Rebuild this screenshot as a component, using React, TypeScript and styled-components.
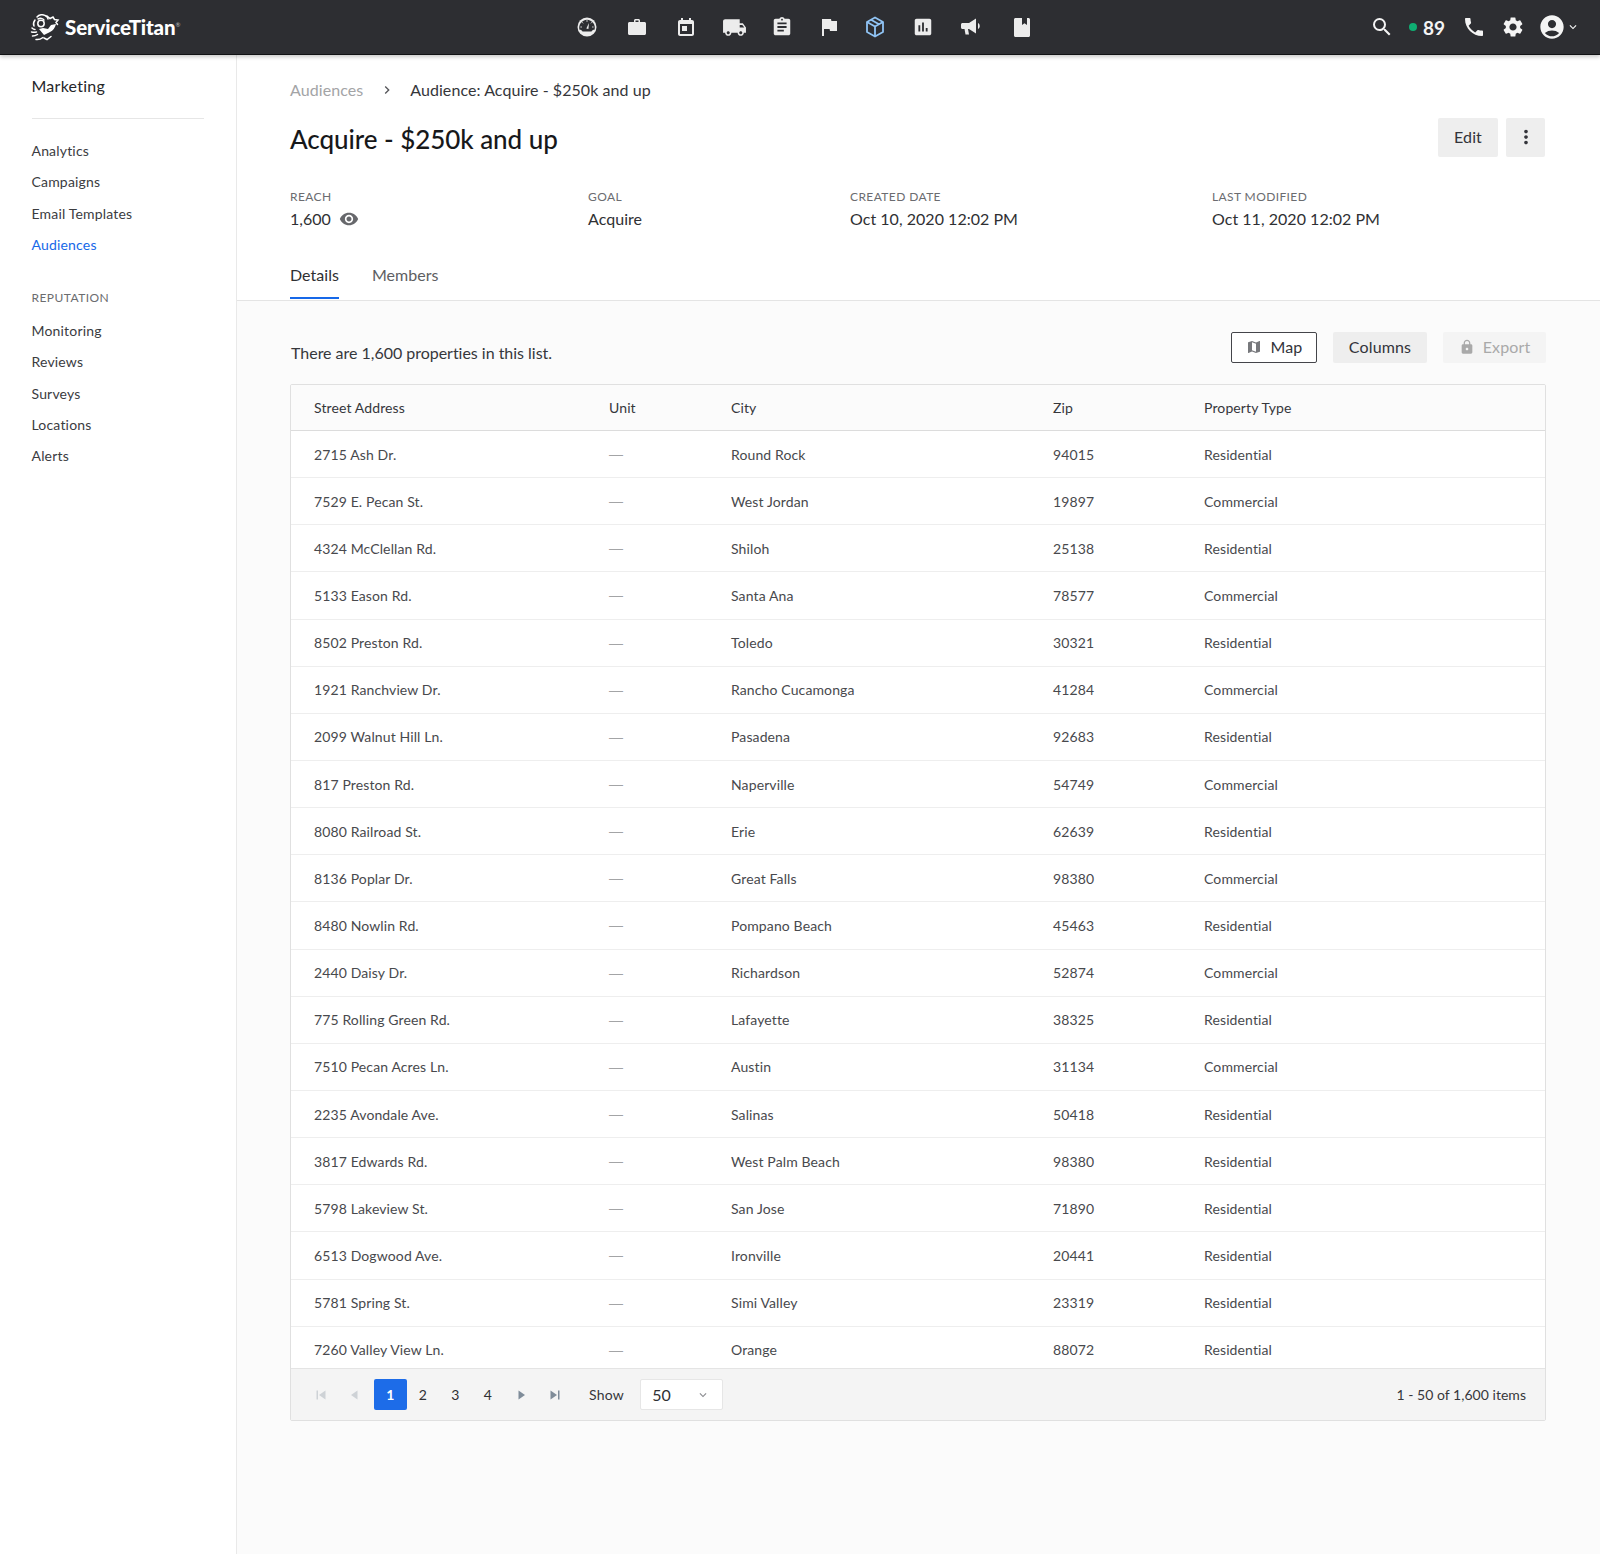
import React from "react";
import styled, { createGlobalStyle } from "styled-components";
import {
  MdLocalShipping, MdAssignment, MdFlag, MdAssessment,
  MdSearch, MdPhone, MdSettings, MdAccountCircle, MdKeyboardArrowDown, MdVisibility, MdMoreVert, MdMap, MdLock, MdChevronRight,
} from "react-icons/md";

const Global = createGlobalStyle`
  html, body { margin: 0; padding: 0; background: #fff; }
  body { font-family: Lato, "Open Sans", sans-serif; color: #2f3033; }
  * { box-sizing: border-box; }
`;

const Page = styled.div`
  width: 1600px;
  height: 1554px;
  display: flex;
  flex-direction: column;
  overflow: hidden;
`;
const TopBar = styled.header`
  height: 55px;
  flex: none;
  display: grid;
  grid-template-columns: 1fr auto 1fr;
  align-items: center;
  background: #2d2e32;
  border-bottom: 1px solid #111214;
  box-shadow: 0 2px 4px rgba(0, 0, 0, 0.22);
  position: relative;
  z-index: 2;
`;
const Brand = styled.div`
  display: flex;
  align-items: center;
  gap: 5px;
  padding-left: 30px;
`;
const BrandName = styled.span`
  font: 900 20.5px/1 "Lato", sans-serif;
  letter-spacing: -0.15px;
  color: #fff;
  sup { font-size: 6px; font-weight: 400; color: #bbb; vertical-align: 8px; line-height: 0; }
`;
const NavIcons = styled.nav`
  display: flex;
  align-items: center;
  margin-left: 10px;
`;
const NavSlot = styled.span<{ $w: number; $active?: boolean }>`
  width: ${(p) => p.$w}px;
  display: flex;
  justify-content: center;
  align-items: center;
  color: ${(p) => (p.$active ? "#90c4f5" : "#ececec")};
`;
const Tools = styled.div`
  display: flex;
  align-items: center;
  justify-content: flex-end;
  padding-right: 20px;
  color: #f4f4f4;
`;
const Status = styled.span`
  display: flex;
  align-items: center;
  gap: 6px;
  margin: 0 17px 0 15px;
  font: 700 19px/1 Lato, sans-serif;
`;
const Dot = styled.i`
  width: 8px;
  height: 8px;
  border-radius: 50%;
  background: #0fae72;
`;
const ToolIcon = styled.span<{ $gap?: number }>`
  display: flex;
  margin-right: ${(p) => p.$gap ?? 0}px;
`;
const Body = styled.div`
  flex: 1;
  display: flex;
  min-height: 0;
`;
const Sidebar = styled.aside`
  width: 237px;
  flex: none;
  background: #fff;
  border-right: 1px solid #e9e9e9;
  padding: 21px 32px 0 31.500px;
`;
const SideTitle = styled.div`
  font-size: 16px;
  line-height: 20px;
  letter-spacing: 0.25px;
  color: #26272a;
  padding-bottom: 22px;
  border-bottom: 1px solid #e6e6e6;
  margin-bottom: 16px;
`;
const SideLink = styled.div<{ $active?: boolean }>`
  height: 31.3px;
  display: flex;
  align-items: center;
  font-size: 14px;
  letter-spacing: 0.18px;
  color: ${(p) => (p.$active ? "#1668e8" : "#3b3c3f")};
`;
const SideSection = styled.div`
  font-size: 12px;
  letter-spacing: 0.45px;
  color: #6b6c6f;
  margin: 29.6px 0 9px;
  line-height: 16px;
`;
const Main = styled.main`
  flex: 1;
  min-width: 0;
  display: flex;
  flex-direction: column;
`;
const Head = styled.section`
  background: #fff;
  border-bottom: 1px solid #e4e4e4;
  padding: 25px 55px 0 53px;
  height: 246px;
  flex: none;
`;
const Crumbs = styled.div`
  display: flex;
  align-items: center;
  font-size: 16px;
  line-height: 20px;
  letter-spacing: 0.07px;
  color: #35363a;
`;
const CrumbLink = styled.span`
  color: #a3a4a6;
`;
const CrumbSep = styled.span`
  display: flex;
  color: #55565a;
  margin: 0 15px 0 16px;
`;
const TitleRow = styled.div`
  display: flex;
  align-items: flex-start;
  justify-content: space-between;
  margin-top: 15px;
`;
const Title = styled.h1`
  margin: 0;
  font-size: 26px;
  line-height: 48px;
  font-weight: 500;
  letter-spacing: -0.05px;
  color: #17181a;
`;
const Actions = styled.div`
  display: flex;
  gap: 8px;
  margin-top: 3px;
`;
const GreyButton = styled.button<{ $w: number; $h?: number; $fade?: boolean }>`
  width: ${(p) => p.$w}px;
  height: ${(p) => p.$h ?? 39}px;
  border: 0;
  border-radius: 2px;
  display: flex;
  align-items: center;
  justify-content: center;
  gap: 8px;
  padding: 0 0 1px;
  font: 400 16px/1 Lato, sans-serif;
  letter-spacing: 0.15px;
  background: ${(p) => (p.$fade ? "#f4f4f4" : "#eeeeee")};
  color: ${(p) => (p.$fade ? "#a9a9a9" : "#33343a")};
`;
const OutlineButton = styled.button`
  width: 86px;
  height: 31px;
  border: 1px solid #44454a;
  border-radius: 2px;
  background: #fff;
  display: flex;
  align-items: center;
  justify-content: center;
  gap: 9px;
  padding: 0 0 1px;
  font: 400 16px/1 Lato, sans-serif;
  letter-spacing: 0.15px;
  color: #33343a;
`;
const Meta = styled.div`
  display: grid;
  grid-template-columns: 298px 262px 362px 1fr;
  margin-top: 26px;
`;
const MetaLabel = styled.div`
  font-size: 12px;
  line-height: 16px;
  letter-spacing: 0.4px;
  color: #6b6c70;
`;
const MetaValue = styled.div`
  display: flex;
  align-items: center;
  gap: 8px;
  margin-top: 3px;
  font-size: 16px;
  line-height: 22px;
  letter-spacing: 0.03px;
  color: #2f3033;
  svg { color: #67686c; }
`;
const Tabs = styled.div`
  display: flex;
  gap: 33px;
  margin-top: 28px;
`;
const Tab = styled.div<{ $active?: boolean }>`
  height: 41px;
  padding-top: 7px;
  font-size: 16px;
  line-height: 20px;
  letter-spacing: 0.03px;
  color: ${(p) => (p.$active ? "#2f3033" : "#5d5e62")};
  border-bottom: 2px solid ${(p) => (p.$active ? "#1668e8" : "transparent")};
`;
const Content = styled.section`
  flex: 1;
  background: #fbfbfb;
  padding: 31px 53px 0 53px;
`;
const ListBar = styled.div`
  display: flex;
  align-items: center;
  justify-content: space-between;
  height: 31px;
  margin-bottom: 21px;
`;
const Count = styled.div`
  font-size: 16px;
  letter-spacing: -0.02px;
  color: #36373b;
  padding: 10px 0 0 1px;
`;
const ListActions = styled.div`
  display: flex;
  gap: 16px;
  margin-right: 1px;
`;
const Table = styled.div`
  width: 1256px;
  border: 1px solid #e0e0e0;
  border-radius: 2px;
  overflow: hidden;
  background: #fff;
`;
const Row = styled.div<{ $head?: boolean }>`
  display: grid;
  grid-template-columns: 295px 122px 322px 151px 1fr;
  align-items: center;
  height: ${(p) => (p.$head ? "46px" : "47.15px")};
  padding: ${(p) => (p.$head ? "0 0 1px 23px" : "0 0 0 23px")};
  font-size: 14px;
  letter-spacing: 0.12px;
  color: ${(p) => (p.$head ? "#36373b" : "#48494d")};
  background: ${(p) => (p.$head ? "#fbfbfb" : "#fff")};
  border-bottom: 1px solid ${(p) => (p.$head ? "#dcdcdc" : "#eeeeee")};
`;
const Rows = styled.div`
  height: 937px;
  overflow: hidden;
`;
const Dash = styled.span`
  font-family: "Liberation Sans", sans-serif;
  color: #a3a4a6;
`;
const Footer = styled.div`
  height: 52px;
  background: #f4f4f4;
  border-top: 1px solid #e4e4e4;
  display: flex;
  align-items: center;
  padding: 0 19px 0 15px;
  font-size: 14px;
  color: #36373b;
`;
const PageArrow = styled.span<{ $off?: boolean; $before?: number; $after?: number }>`
  width: 32px;
  display: flex;
  justify-content: center;
  margin: 0 ${(p) => p.$after ?? 0}px 0 ${(p) => p.$before ?? 0}px;
  color: ${(p) => (p.$off ? "#ced2d6" : "#7f8c99")};
`;
const PageNum = styled.span<{ $active?: boolean }>`
  width: 32.5px;
  height: 31px;
  display: flex;
  align-items: center;
  justify-content: center;
  border-radius: 2px;
  font-size: 14px;
  font-weight: ${(p) => (p.$active ? 700 : 400)};
  background: ${(p) => (p.$active ? "#1d6ce8" : "transparent")};
  color: ${(p) => (p.$active ? "#fff" : "#2f3033")};
`;
const ShowLabel = styled.span`
  margin: 0 16px 0 19px;
  letter-spacing: 0.25px;
`;
const Select = styled.div`
  width: 83px;
  height: 31px;
  background: #fff;
  border: 1px solid #e6e6e6;
  border-radius: 2px;
  display: flex;
  align-items: center;
  justify-content: space-between;
  padding: 0 12px 0 11px;
  font-size: 16px;
  color: #2f3033;
  svg { color: #8b8c90; }
`;
const Items = styled.span`
  margin-left: auto;
  letter-spacing: 0.03px;
`;

const Gauge = () => (
  <svg width="20" height="20" viewBox="0 0 20 20">
    <circle cx="10" cy="10" r="9.500" fill="currentColor" />
    <path d="M2.500 12.800a7.800 7.800 0 1 1 15 0c-1.500 0-2.500.5-3 1.700h-9c-.5-1.200-1.500-1.700-3-1.700z" fill="#2d2e32" />
    <path d="M10 3.200v1.600M5 5.200l1.100 1.100M15 5.200l-1.100 1.100M3.400 10h1.500M15.100 10h1.500" stroke="currentColor" strokeWidth="0.900" />
    <path d="M9.300 11.500L12 6l-.6 6z" fill="currentColor" />
  </svg>
);
const Briefcase = () => (
  <svg width="18" height="16" viewBox="0 0 18 16" fill="currentColor">
    <path d="M6 3V1.500C6 .7 6.700 0 7.500 0h3c.8 0 1.500.7 1.500 1.500V3h4.500c.8 0 1.500.7 1.500 1.500v10c0 .8-.7 1.500-1.500 1.500h-15C.7 16 0 15.300 0 14.500v-10C0 3.700.7 3 1.500 3zm1.500-1.500V3h3V1.500z" fillRule="evenodd" />
  </svg>
);
const Calendar = () => (
  <svg width="16" height="18" viewBox="0 0 16 18" fill="currentColor">
    <path d="M3 0h2v2h6V0h2v2h1c1.100 0 2 .9 2 2v12c0 1.100-.9 2-2 2H2c-1.100 0-2-.9-2-2V4c0-1.100.9-2 2-2h1zM2 6v10h12V6z" fillRule="evenodd" />
    <rect x="4" y="8" width="5" height="5" />
  </svg>
);
const Megaphone = () => (
  <svg width="21" height="18" viewBox="0 0 21 18" fill="currentColor">
    <path d="M1.500 5H8l7-4.500v15L8 11H7l1 5.500H4.500L3.500 11H1.500C.7 11 0 10.300 0 9.500v-3C0 5.700.7 5 1.500 5z" />
    <path d="M17 5c2.300 1.200 2.300 4.800 0 6z" />
  </svg>
);
const NoteBook = () => (
  <svg width="16" height="19" viewBox="0 0 16 19" fill="currentColor">
    <path d="M1.500 0H8v7l2.500-1.800L13 7V0h1.500C15.300 0 16 .7 16 1.500v16c0 .8-.7 1.500-1.500 1.500h-13C.7 19 0 18.300 0 17.500v-16C0 .7.7 0 1.500 0z" />
  </svg>
);

const rows: string[][] = [
  ["2715 Ash Dr.", "Round Rock", "94015", "Residential"],
  ["7529 E. Pecan St.", "West Jordan", "19897", "Commercial"],
  ["4324 McClellan Rd.", "Shiloh", "25138", "Residential"],
  ["5133 Eason Rd.", "Santa Ana", "78577", "Commercial"],
  ["8502 Preston Rd.", "Toledo", "30321", "Residential"],
  ["1921 Ranchview Dr.", "Rancho Cucamonga", "41284", "Commercial"],
  ["2099 Walnut Hill Ln.", "Pasadena", "92683", "Residential"],
  ["817 Preston Rd.", "Naperville", "54749", "Commercial"],
  ["8080 Railroad St.", "Erie", "62639", "Residential"],
  ["8136 Poplar Dr.", "Great Falls", "98380", "Commercial"],
  ["8480 Nowlin Rd.", "Pompano Beach", "45463", "Residential"],
  ["2440 Daisy Dr.", "Richardson", "52874", "Commercial"],
  ["775 Rolling Green Rd.", "Lafayette", "38325", "Residential"],
  ["7510 Pecan Acres Ln.", "Austin", "31134", "Commercial"],
  ["2235 Avondale Ave.", "Salinas", "50418", "Residential"],
  ["3817 Edwards Rd.", "West Palm Beach", "98380", "Residential"],
  ["5798 Lakeview St.", "San Jose", "71890", "Residential"],
  ["6513 Dogwood Ave.", "Ironville", "20441", "Residential"],
  ["5781 Spring St.", "Simi Valley", "23319", "Residential"],
  ["7260 Valley View Ln.", "Orange", "88072", "Residential"],
];

const Logo = () => (
  <svg width="30" height="28" viewBox="0 0 30 28" fill="none" stroke="#fff" strokeWidth="1.500" strokeLinecap="round">
    <path d="M7 4c2-2.500 6-3 8-1.500 2 .8 3 2 3 3.500M5 7c-1.500 2-2 4-1 6M8 6c2-1 5-1 6 1" />
    <path d="M17 3l3 2.500 3-1.500 1.500 2.500 3.500.5-2 2.500 1.500 2" />
    <circle cx="11" cy="10.500" r="3.200" />
    <path d="M2 15c1 1 2 1.500 3 1.500M1.500 19c2 .5 3 .5 5 0M2.500 23c2 0 3.500-.5 5-1.500M6 26.500c3 .5 5-.5 7-2" />
    <path d="M9 16l5 6 6-3c3-1.500 5-4 6-8l-5 1-3 4-5-1z" fill="#fff" stroke="none" />
    <path d="M14 25l3 1.500 4-3" />
  </svg>
);

const Triangle = ({ dir, bar }: { dir: "l" | "r"; bar?: boolean }) => (
  <svg width="12" height="12" viewBox="0 0 12 12" fill="currentColor">
    {dir === "l" ? <path d="M9.500 1.500v9L3 6z" /> : <path d="M2.500 1.500v9L9 6z" />}
    {bar && (dir === "l" ? <rect x="0.500" y="1.500" width="1.500" height="9" /> : <rect x="10" y="1.500" width="1.500" height="9" />)}
  </svg>
);

export default function App() {
  return (
    <Page>
      <Global />
      <TopBar>
        <Brand>
          <Logo />
          <BrandName>ServiceTitan<sup>®</sup></BrandName>
        </Brand>
        <NavIcons>
          <NavSlot $w={50.5}><Gauge /></NavSlot>
          <NavSlot $w={49.5}><Briefcase /></NavSlot>
          <NavSlot $w={48}><Calendar /></NavSlot>
          <NavSlot $w={48.5}><MdLocalShipping size={25} /></NavSlot>
          <NavSlot $w={47}><MdAssignment size={22} /></NavSlot>
          <NavSlot $w={46}><MdFlag size={24} /></NavSlot>
          <NavSlot $w={47} $active>
            <svg width="20" height="22" viewBox="0 0 20 22" fill="none" stroke="currentColor" strokeWidth="1.800" strokeLinejoin="round">
              <path d="M10 1.500l8 4.500v10l-8 4.500L2 16V6z" />
              <path d="M2 6l8 4.500L18 6M10 10.500v10M6 3.800l8 4.500" />
            </svg>
          </NavSlot>
          <NavSlot $w={48}><MdAssessment size={22} /></NavSlot>
          <NavSlot $w={50}><Megaphone /></NavSlot>
          <NavSlot $w={51.5}><NoteBook /></NavSlot>
        </NavIcons>
        <Tools>
          <ToolIcon><MdSearch size={24} /></ToolIcon>
          <Status><Dot />89</Status>
          <ToolIcon $gap={15}><MdPhone size={24} /></ToolIcon>
          <ToolIcon $gap={13}><MdSettings size={24} /></ToolIcon>
          <ToolIcon><MdAccountCircle size={28} /></ToolIcon>
          <ToolIcon><MdKeyboardArrowDown size={14} /></ToolIcon>
        </Tools>
      </TopBar>
      <Body>
        <Sidebar>
          <SideTitle>Marketing</SideTitle>
          <SideLink>Analytics</SideLink>
          <SideLink>Campaigns</SideLink>
          <SideLink>Email Templates</SideLink>
          <SideLink $active>Audiences</SideLink>
          <SideSection>REPUTATION</SideSection>
          <SideLink>Monitoring</SideLink>
          <SideLink>Reviews</SideLink>
          <SideLink>Surveys</SideLink>
          <SideLink>Locations</SideLink>
          <SideLink>Alerts</SideLink>
        </Sidebar>
        <Main>
          <Head>
            <Crumbs>
              <CrumbLink>Audiences</CrumbLink>
              <CrumbSep><MdChevronRight size={16} /></CrumbSep>
              Audience: Acquire - $250k and up
            </Crumbs>
            <TitleRow>
              <Title>Acquire - $250k and up</Title>
              <Actions>
                <GreyButton $w={60}>Edit</GreyButton>
                <GreyButton $w={39}><MdMoreVert size={22} /></GreyButton>
              </Actions>
            </TitleRow>
            <Meta>
              <div>
                <MetaLabel>REACH</MetaLabel>
                <MetaValue>1,600 <MdVisibility size={20} /></MetaValue>
              </div>
              <div>
                <MetaLabel>GOAL</MetaLabel>
                <MetaValue>Acquire</MetaValue>
              </div>
              <div>
                <MetaLabel>CREATED DATE</MetaLabel>
                <MetaValue>Oct 10, 2020 12:02 PM</MetaValue>
              </div>
              <div>
                <MetaLabel>LAST MODIFIED</MetaLabel>
                <MetaValue>Oct 11, 2020 12:02 PM</MetaValue>
              </div>
            </Meta>
            <Tabs>
              <Tab $active>Details</Tab>
              <Tab>Members</Tab>
            </Tabs>
          </Head>
          <Content>
            <ListBar>
              <Count>There are 1,600 properties in this list.</Count>
              <ListActions>
                <OutlineButton><MdMap size={16} color="#77787c" />Map</OutlineButton>
                <GreyButton $w={94} $h={31}>Columns</GreyButton>
                <GreyButton $w={103} $h={31} $fade><MdLock size={16} color="#a9a9a9" />Export</GreyButton>
              </ListActions>
            </ListBar>
            <Table>
              <Row $head>
                <span>Street Address</span><span>Unit</span><span>City</span><span>Zip</span><span>Property Type</span>
              </Row>
              <Rows>
                {rows.map((r) => (
                  <Row key={r[0]}>
                    <span>{r[0]}</span>
                    <Dash>—</Dash>
                    <span>{r[1]}</span>
                    <span>{r[2]}</span>
                    <span>{r[3]}</span>
                  </Row>
                ))}
              </Rows>
              <Footer>
                <PageArrow $off><Triangle dir="l" bar /></PageArrow>
                <PageArrow $off $after={4}><Triangle dir="l" /></PageArrow>
                <PageNum $active>1</PageNum>
                <PageNum>2</PageNum>
                <PageNum>3</PageNum>
                <PageNum>4</PageNum>
                <PageArrow $before={2}><Triangle dir="r" /></PageArrow>
                <PageArrow><Triangle dir="r" bar /></PageArrow>
                <ShowLabel>Show</ShowLabel>
                <Select>50 <MdKeyboardArrowDown size={14} /></Select>
                <Items>1 - 50 of 1,600 items</Items>
              </Footer>
            </Table>
          </Content>
        </Main>
      </Body>
    </Page>
  );
}
